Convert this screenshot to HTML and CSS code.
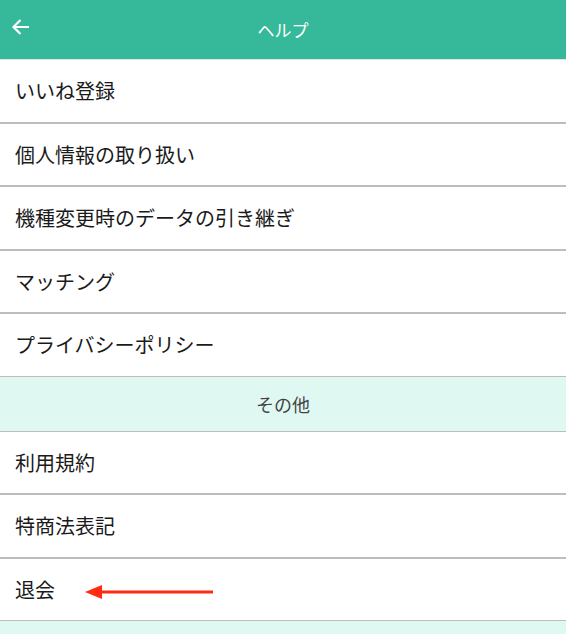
FILE: index.html
```html
<!DOCTYPE html>
<html lang="ja">
  <head>
    <meta charset="UTF-8" />
    <title>ヘルプ</title>
    <link rel="stylesheet" href="styles.css">
  </head>
  <body>
    <div class="header">
      <svg class="back" width="24" height="24" viewBox="0 0 24 24">
        <path d="M20 12H4.5M11.5 5l-7 7 7 7" fill="none" stroke="#fff" stroke-width="2.2"/>
      </svg>
      <div class="title">ヘルプ</div>
    </div>
    <div class="list">
      <div class="item">いいね登録</div>
      <div class="item">個人情報の取り扱い</div>
      <div class="item">機種変更時のデータの引き継ぎ</div>
      <div class="item">マッチング</div>
      <div class="item">プライバシーポリシー</div>
      <div class="section">その他</div>
      <div class="item">利用規約</div>
      <div class="item">特商法表記</div>
      <div class="item">退会
        <svg class="pointer" width="130" height="16" viewBox="0 0 130 16">
          <path d="M16 8H128" stroke="#ff2a12" stroke-width="3"/>
          <path d="M0 8L17 1V15Z" fill="#ff2a12"/>
        </svg>
      </div>
      <div class="section"></div>
    </div>
  </body>
</html>
```

FILE: styles.css
```css
body {
  margin: 0;
  background-color: #fff;
  font-family: "Noto Sans CJK JP", "Noto Sans", sans-serif;
}
.header {
  position: relative;
  height: 59px;
  background-color: #35b99a;
  border-bottom: 1px solid #d8e8e2;
  display: flex;
  justify-content: center;
  align-items: center;
}
.back {
  position: absolute;
  left: 9px;
  top: 15px;
}
.title {
  color: #fff;
  font-size: 17px;
}
.item {
  height: 61.5px;
  border-bottom: 2px solid #bdbdbd;
  display: flex;
  align-items: center;
  padding-left: 15px;
  font-size: 20px;
  color: #1a1a1a;
}
.pointer {
  margin-left: 30px;
  margin-top: 6px;
}
.section {
  height: 54px;
  background-color: #e0f8f2;
  border-bottom: 1px solid #bdbdbd;
  display: flex;
  justify-content: center;
  align-items: center;
  font-size: 18px;
  color: #444;
}
.item:has(+ .section) {
  border-bottom-width: 1px;
}
```
